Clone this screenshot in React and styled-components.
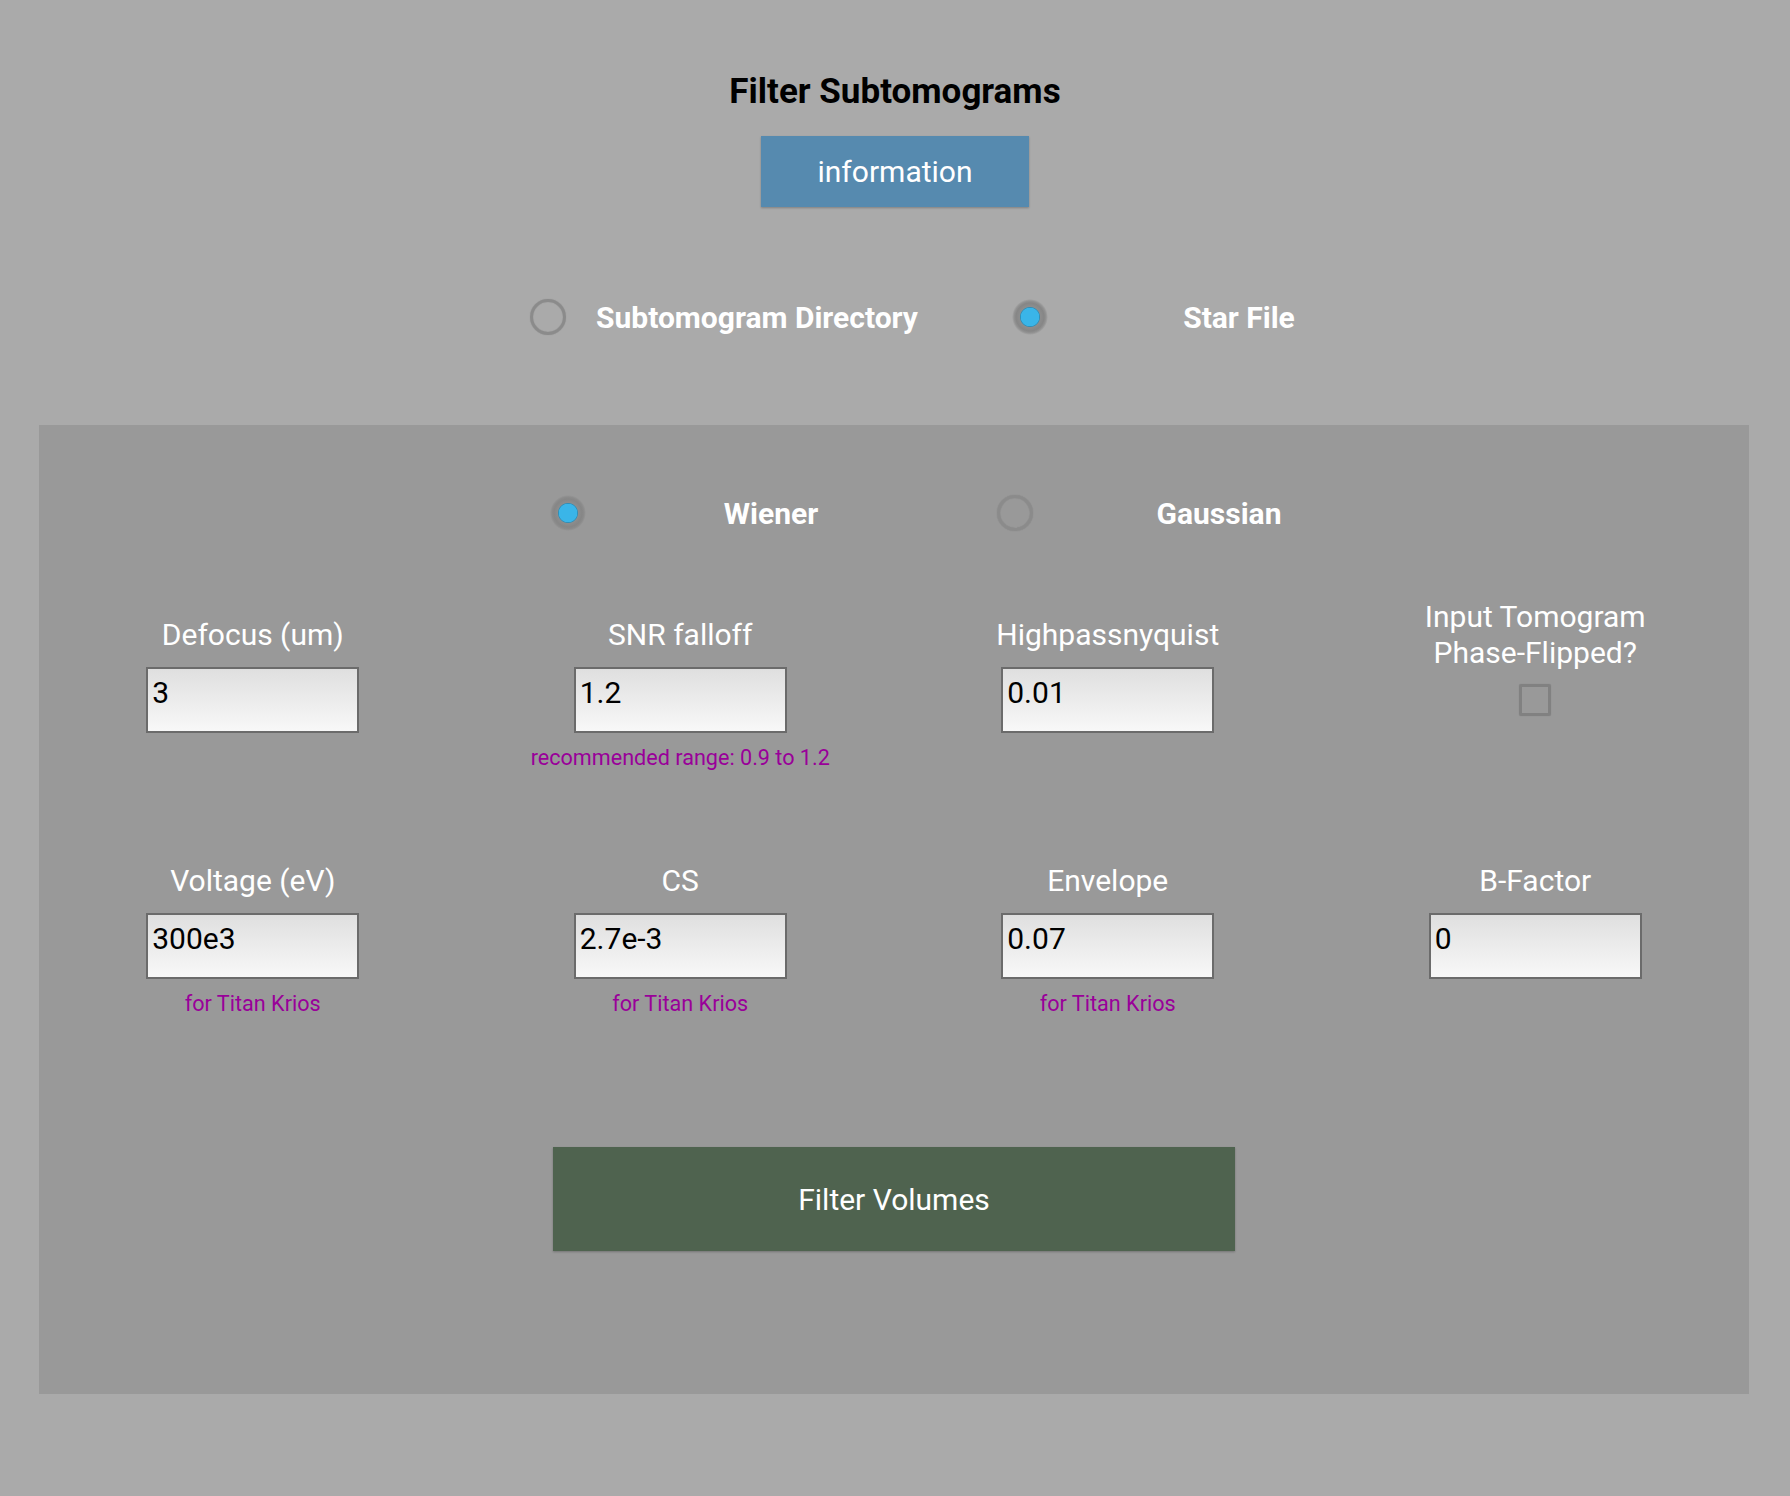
import styled, { createGlobalStyle } from 'styled-components';

// Page-wide defaults
const GlobalStyle = createGlobalStyle`
  html, body {
    margin: 0;
    padding: 0;
    background: #aaaaaa;
  }
  body {
    font-family: Roboto, "Liberation Sans", sans-serif;
  }
`;

const Page = styled.div`
  width: 1790px;
  min-height: 1496px;
  background: #aaaaaa;
  display: flex;
  flex-direction: column;
  align-items: center;
  padding-top: 72px;
  box-sizing: border-box;
`;

const Title = styled.h1`
  margin: 0;
  font-size: 35px;
  line-height: 40px;
  font-weight: 700;
  color: #000;
`;

const InfoButton = styled.button`
  margin-top: 24px;
  width: 268px;
  height: 71px;
  border: none;
  background: #568aaf;
  color: #fff;
  font-family: Roboto, "Liberation Sans", sans-serif;
  font-size: 30px;
  box-shadow: 0 1px 2px rgba(0, 0, 0, 0.25);
  cursor: pointer;
`;

const RadioRow = styled.div`
  align-self: stretch;
  display: flex;
  justify-content: center;
  padding-left: ${(p) => p.$shift}px;
  margin-top: ${(p) => p.$top}px;
`;

const RadioGrid = styled.div`
  display: grid;
  grid-template-columns: ${(p) => p.$cols};
  align-items: center;
  justify-items: center;
  height: 36px;
`;

const Radio = styled.span`
  width: 36px;
  height: 36px;
  border-radius: 50%;
  box-sizing: border-box;
  ${(p) =>
    p.$checked
      ? `background: radial-gradient(circle, #3ab5e8 0 9px, #2f8fb8 9.5px, #8d8d8d 10.5px, #868686 14px, rgba(130,130,130,0.6) 16px, rgba(130,130,130,0) 18px);`
      : `border: 3px solid #8b8b8b; box-shadow: 0 0 1px rgba(0,0,0,0.2), inset 0 0 1px rgba(0,0,0,0.2);`}
`;

const RadioLabel = styled.span`
  font-size: 30px;
  font-weight: 700;
  color: #fff;
  white-space: nowrap;
`;

const Panel = styled.section`
  align-self: flex-start;
  margin: 90px 0 0 39px;
  width: 1710px;
  background: #999999;
  padding: 70px 0 143px;
  display: flex;
  flex-direction: column;
  align-items: center;
`;

const FieldGrid = styled.div`
  align-self: stretch;
  margin-top: 72px;
  display: grid;
  grid-template-columns: repeat(4, 1fr);
  row-gap: 78px;
`;

const Field = styled.div`
  display: flex;
  flex-direction: column;
  align-items: center;
`;

const FieldLabel = styled.div`
  height: 64px;
  display: flex;
  align-items: center;
  justify-content: center;
  text-align: center;
  font-size: 30px;
  line-height: 36px;
  color: #fff;
`;

const Input = styled.input`
  width: 213px;
  height: 66px;
  box-sizing: border-box;
  border: 2px solid #6b6b6b;
  padding: 6px 4px 22px;
  background: linear-gradient(#dfdfdf, #f8f8f8);
  font-family: Roboto, "Liberation Sans", sans-serif;
  font-size: 30px;
  line-height: 34px;
  color: #000;
  outline: none;
`;

const CheckSlot = styled.div`
  height: 66px;
  display: flex;
  align-items: center;
  justify-content: center;
`;

const Checkbox = styled.span`
  width: 32px;
  height: 32px;
  box-sizing: border-box;
  border: 3px solid #818181;
  border-radius: 2px;
  box-shadow: 0 0 1px rgba(0, 0, 0, 0.2);
`;

const Note = styled.div`
  margin-top: 12px;
  height: 26px;
  font-size: 21.6px;
  line-height: 26px;
  color: #990099;
  white-space: nowrap;
`;

const FilterButton = styled.button`
  margin-top: 130px;
  width: 682px;
  height: 104px;
  border: none;
  background: #4f634f;
  color: #fff;
  font-family: Roboto, "Liberation Sans", sans-serif;
  font-size: 30px;
  box-shadow: 0 1px 2px rgba(0, 0, 0, 0.25);
  cursor: pointer;
`;

const fields = [
  { label: 'Defocus (um)', value: '3' },
  { label: 'SNR falloff', value: '1.2', note: 'recommended range: 0.9 to 1.2' },
  { label: 'Highpassnyquist', value: '0.01' },
  { label: ['Input Tomogram', 'Phase-Flipped?'], checkbox: true },
  { label: 'Voltage (eV)', value: '300e3', note: 'for Titan Krios' },
  { label: 'CS', value: '2.7e-3', note: 'for Titan Krios' },
  { label: 'Envelope', value: '0.07', note: 'for Titan Krios' },
  { label: 'B-Factor', value: '0' },
];

const App = () => (
  <>
    <GlobalStyle />
    <Page>
      <Title>Filter Subtomograms</Title>
      <InfoButton>information</InfoButton>

      <RadioRow $top={92} $shift={66}>
        <RadioGrid $cols="76px 342px 204px 214px">
          <Radio />
          <RadioLabel>Subtomogram Directory</RadioLabel>
          <Radio $checked />
          <RadioLabel>Star File</RadioLabel>
        </RadioGrid>
      </RadioRow>

      <Panel>
        <RadioRow $top={0} $shift={82}>
          <RadioGrid $cols="80px 326px 162px 246px">
            <Radio $checked />
            <RadioLabel>Wiener</RadioLabel>
            <Radio />
            <RadioLabel>Gaussian</RadioLabel>
          </RadioGrid>
        </RadioRow>

        <FieldGrid>
          {fields.map((f) => (
            <Field key={Array.isArray(f.label) ? f.label[0] : f.label}>
              <FieldLabel>
                {Array.isArray(f.label) ? (
                  <span>
                    {f.label[0]}
                    <br />
                    {f.label[1]}
                  </span>
                ) : (
                  f.label
                )}
              </FieldLabel>
              {f.checkbox ? (
                <CheckSlot>
                  <Checkbox />
                </CheckSlot>
              ) : (
                <Input type="text" defaultValue={f.value} />
              )}
              <Note>{f.note}</Note>
            </Field>
          ))}
        </FieldGrid>

        <FilterButton>Filter Volumes</FilterButton>
      </Panel>
    </Page>
  </>
);

export default App;
